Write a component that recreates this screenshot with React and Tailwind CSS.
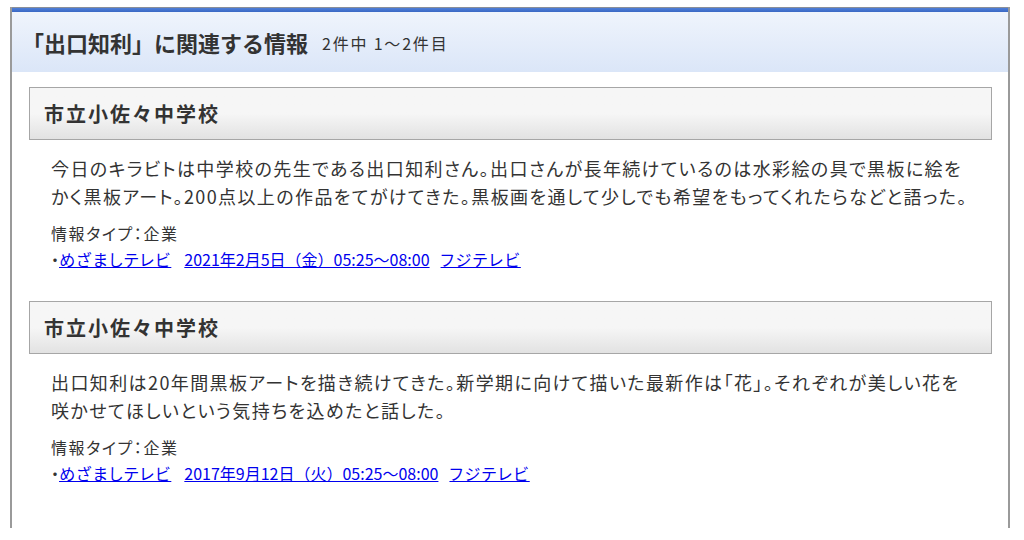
import React from 'react';

const items = [
  {
    title: '市立小佐々中学校',
    lines: [
      '今日のキラビトは中学校の先生である出口知利さん。出口さんが長年続けているのは水彩絵の具で黒板に絵を',
      'かく黒板アート。200点以上の作品をてがけてきた。黒板画を通して少しでも希望をもってくれたらなどと語った。',
    ],
    type: '企業',
    program: 'めざましテレビ',
    date: '2021年2月5日（金）05:25〜08:00',
    station: 'フジテレビ',
  },
  {
    title: '市立小佐々中学校',
    lines: [
      '出口知利は20年間黒板アートを描き続けてきた。新学期に向けて描いた最新作は「花」。それぞれが美しい花を',
      '咲かせてほしいという気持ちを込めたと話した。',
    ],
    type: '企業',
    program: 'めざましテレビ',
    date: '2017年9月12日（火）05:25〜08:00',
    station: 'フジテレビ',
  },
];

const font = { fontFamily: '"Noto Sans CJK JP", "Liberation Sans", sans-serif' };

const Item = ({ item }) => (
  <div className="mb-[29px]">
    <div className="h-[53px] border border-[#a6a6a6] bg-gradient-to-b from-[#f6f6f6] from-50% to-[#e2e2e2] flex items-center pl-[14px]">
      <h3 className="text-[20px] font-bold text-[#333] tracking-[2px]">{item.title}</h3>
    </div>
    <div className="pl-[22px] pt-[14px] text-[#333]">
      {item.lines.map((line, i) => (
        <p key={i} className="text-[18px] leading-[28px] tracking-[1.4px] whitespace-nowrap [font-feature-settings:'palt']">
          {line}
        </p>
      ))}
      <p className="mt-[10px] text-[16px] leading-[26px] [font-feature-settings:'palt'] tracking-[1.6px]">情報タイプ：{item.type}</p>
      <p className="text-[16px] leading-[26px] whitespace-nowrap">
        <span className="[font-feature-settings:'palt']">・</span>
        <a href="#" className="text-[#0000ee] underline tracking-[1.4px] [font-feature-settings:'palt']">{item.program}</a>
        <a href="#" className="ml-[13px] text-[#0000ee] underline">{item.date}</a>
        <a href="#" className="ml-[11px] text-[#0000ee] underline tracking-[1.6px] [font-feature-settings:'palt']">{item.station}</a>
      </p>
    </div>
  </div>
);

export default function App() {
  return (
    <div className="bg-white w-[1024px] h-[540px] overflow-hidden pt-[7px] pl-[10px]" style={font}>
      <div className="w-[1000px] h-[521px] border-x-2 border-[#9a9a9a]">
        <div className="border-t border-[#8a8f99]" />
        <div className="h-[4px] bg-gradient-to-b from-[#4f7fd8] to-[#3a68c4]" />
        <div className="h-[60px] bg-gradient-to-b from-[#eff4fc] to-[#dbe6f8] flex items-center pl-[10px]">
          <h2 className="text-[22px] font-bold text-[#333]">「出口知利」に関連する情報</h2>
          <span className="ml-[14px] mt-[2px] text-[16px] tracking-[1.8px] text-[#333]">2件中 1〜2件目</span>
        </div>
        <div className="pt-[15px] pl-[17px] pr-[16px]">
          {items.map((item, i) => (
            <Item key={i} item={item} />
          ))}
        </div>
      </div>
    </div>
  );
}
